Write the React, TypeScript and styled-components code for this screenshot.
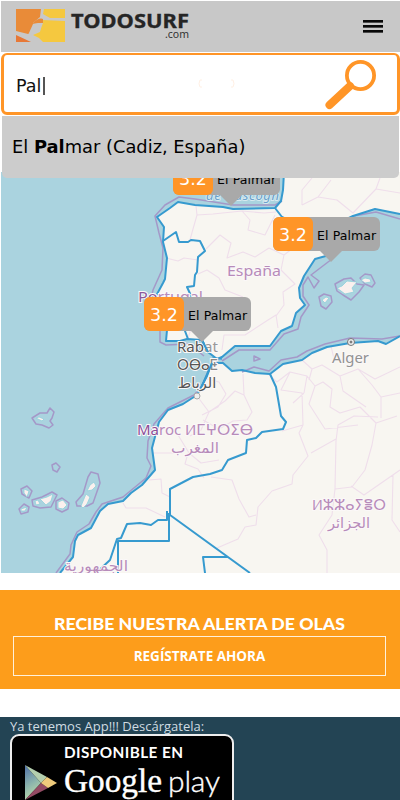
import React from "react";
import styled, { createGlobalStyle } from "styled-components";

const GlobalStyle = createGlobalStyle`
  * { box-sizing: border-box; }
  html, body { margin: 0; background: #fff; }
  body { height: 800px; overflow: hidden; font-family: "DejaVu Sans", sans-serif; }
`;

const Page = styled.div`
  width: 400px;
  height: 800px;
  overflow: hidden;
  display: flex;
  flex-direction: column;
`;

const Header = styled.header`
  flex: none;
  height: 51px;
  margin: 1px 0 0 1px;
  padding: 0 17px 0 13px;
  background: #c8c8c8;
  display: flex;
  justify-content: space-between;
`;

const Logo = styled.svg`
  width: 180px;
  height: 44px;
`;

const MenuButton = styled.button`
  width: 20px;
  height: 13px;
  margin-top: 19px;
  padding: 0;
  border: 0;
  background: none;
  display: flex;
  flex-direction: column;
  justify-content: space-between;
`;

const MenuLine = styled.span`
  display: block;
  width: 100%;
  height: 3px;
  border: solid #4a4a4a;
  border-width: 0 0 1px;
  background: #080808;
`;

const SearchBox = styled.div`
  flex: none;
  height: 62px;
  margin: 1px 0 0 1px;
  padding-left: 12px;
  border: 3px solid #ff9527;
  border-top-width: 2px;
  border-radius: 6px;
  background: #fff;
  display: flex;
  align-items: center;
`;

const Query = styled.span`
  width: 181px;
  display: flex;
  align-items: center;
  color: #111;
  font-size: 17.5px;
  line-height: 24px;
  padding-top: 4px;
`;

const Caret = styled.i`
  width: 2px;
  height: 18px;
  margin-left: 2px;
  background: #555;
`;

const FaintMarks = styled.svg`
  width: 38px;
  height: 10px;
  margin-right: auto;
`;

const SearchIcon = styled.svg`
  width: 54px;
  height: 54px;
  margin-right: 19px;
`;

const Suggestion = styled.div`
  flex: none;
  position: relative;
  z-index: 2;
  height: 62px;
  margin: 1px 1px 0 2px;
  padding: 0 0 1px 10px;
  border-radius: 0 0 5px 5px;
  background: #ccc;
  color: #000;
  display: flex;
  align-items: center;
  font-size: 17.85px;
  white-space: pre;
`;

const MapArea = styled.section`
  flex: none;
  position: relative;
  height: 401px;
  margin: -6px 0 0 1px;
  overflow: hidden;
  background: #aad3df;
`;

const MapDrawing = styled.svg`
  display: block;
  width: 399px;
  height: 401px;
`;

const Pin = styled.div<{ $x: number; $y: number }>`
  position: absolute;
  left: ${(p) => p.$x - 1}px;
  top: ${(p) => p.$y - 172}px;
  width: 107px;
  height: 34px;
  display: flex;
  border-radius: 6px;
  background: #a9a9a9;
  &::after {
    content: "";
    position: absolute;
    left: 46px;
    top: 33px;
    border: 12px solid transparent;
    border-top-color: #a9a9a9;
    border-bottom: 0;
  }
`;

const Score = styled.span`
  width: 40px;
  border-radius: 6px;
  background: #ff9527;
  color: #fff;
  font-size: 17.5px;
  line-height: 36px;
  text-align: center;
`;

const SpotName = styled.span`
  padding-left: 4px;
  color: #000;
  font-size: 12.5px;
  letter-spacing: 0.1px;
  line-height: 37px;
  white-space: nowrap;
`;

const Alert = styled.section`
  flex: none;
  height: 99px;
  margin-top: 17px;
  padding: 23px 14px 13px 13px;
  background: #fd9d1b;
  display: flex;
  flex-direction: column;
`;

const AlertTitle = styled.h2`
  margin: 0;
  height: 23px;
  color: #fff;
  font: 900 17.7px/22px Lato, sans-serif;
  text-align: center;
  white-space: nowrap;
`;

const RegisterButton = styled.button`
  height: 40px;
  padding: 0;
  border: 1px solid #fff1da;
  background: transparent;
  color: #fff;
  font: 700 13.5px/20px "Open Sans", sans-serif;
`;

const Footer = styled.footer`
  flex: 1;
  margin-top: 28px;
  padding-left: 10px;
  background: #234454;
  color: #d0dce2;
  font: 13px/17px "Open Sans", sans-serif;
`;

const FooterText = styled.div`
  height: 17px;
  padding-top: 1px;
`;

const StoreBadge = styled.a`
  display: block;
  width: 224px;
  height: 78px;
  border: 2px solid #eee;
  border-radius: 9px;
  background: #000;
`;

const StoreArt = styled.svg`
  display: block;
  width: 220px;
  height: 74px;
`;

const AFRICA =
  "M60 573 73 557 75 541 78 535 91 528 100 511 108 504 123 501 131 493 142 485 155 470 152 448 159 422 168 410 183 404 197 395 207 376 212 363 223 363 232 371 242 370 255 373 270 374 283 364 302 360 312 353 327 347 350 343 378 341 386 344 400 336 400 573Z";
const IBERIA =
  "M284 172 283 190 281 201 275 208 233 209 223 207 195 205 178 202 170 208 157 217 164 227 163 242 167 258 165 279 163 283 156 296 164 316 167 330 166 341 180 341 187 339 202 340 208 352 217 359 222 357 235 346 270 346 281 331 292 326 296 313 305 305 300 298 299 288 304 276 315 259 333 254 352 235 353 216 375 209 400 214 400 172Z";

const BORDERS = [
  "M163 241 176 232 179 242 188 242 191 240 200 241 205 251 198 257 197 272 195 275 194 286 187 287 193 300 189 321 185 331 188 339",
  "M275 208 282 217 300 226 326 229 353 216",
  "M270 374 276 387 281 416 286 422 283 429 262 432 256 438 247 440 246 453 228 460 222 470 210 474 193 477 170 489 170 515 250 573",
  "M167 511V520L158 520 151 525 140 523 127 524 121 538 117 539 110 560 96 573",
  "M169 513V541H118V573",
  "M228 557H203L205 573",
];

const PROVINCES = [
  "M196 206 197 215 213 214 242 211 250 220 248 230 265 235 275 215M197 215 193 229 190 240M166 258 178 261 184 258 198 260M198 274 207 270 219 278 225 290 243 297M206 249 220 235 231 243 227 258 243 252 255 257 269 248M269 248 284 255 281 270 295 284 283 292 284 305 276 316M242 211 264 213 276 212M284 255 301 242M302 205 318 197 337 200 353 213M302 205 302 190 312 178M318 197 331 180M353 213 376 189 380 178M376 189 400 193M188 338 193 323 206 309M222 350 224 335 245 335 268 320 276 315 278 328",
  "M197 396 209 412 225 401 235 391 244 395 252 412 247 420 233 421 219 429 203 420M207 379 219 382 226 394M244 395 243 374M226 394 218 407 202 415M209 412 201 430 190 436M178 435 189 453 201 463 219 460M152 453 179 453M149 480 161 479 162 493 170 497M123 503 126 508 146 508 165 517M188 453 185 464 198 469 204 478",
  "M269 375 277 382 290 372 307 376 315 386 323 382 332 389 330 407 340 413 360 407 376 423 397 416M290 372 281 390 302 393 303 425 282 431M307 376 304 393M315 386 309 404 325 429 358 425M304 393 293 403M302 360 312 369 322 365 340 376 358 369 375 379 400 367M312 369 309 380M331 346 334 359 350 361M340 376 343 391 366 407M358 369 372 385 381 397 381 418M381 397 400 393M376 423 372 445 365 470 352 487 335 489 332 515 319 535 327 550 327 573M335 489 336 441 338 425 354 416 378 417M303 425 299 433 308 456 293 475 292 484 272 491 258 507 256 525 245 527 238 539 217 548M211 477 232 480 239 499 249 517 256 515M311 453 336 439M351 486 364 495 400 470M393 475 392 520 400 532",
];

const ISLANDS = [
  "M36 418 39 417 44 419 42 421Z",
  "M24 489 29 491 27 497 24 493Z",
  "M21 509 27 507 25 511 21 511Z",
  "M35 501 38 500 40 504 36 505Z",
  "M40 499 47 497 53 494 51 501 46 505Z",
  "M58 502 63 500 67 505 63 509 58 508Z",
  "M81 506 86 494 90 497 87 504 83 508Z",
  "M87 491 90 485 94 482 96 486 92 490Z",
  "M337 288 342 286 347 281 357 282 352 288 354 292 345 294Z",
  "M361 280 365 278 370 279 371 282 365 283Z",
  "M322 300 326 297 329 298 325 303Z",
];

const MARITIME = [
  "M32 418 40 413H47L50 408 54 412 52 418 50 421 53 425 49 428 42 425 36 424Z",
  "M21 489 27 486 32 491 29 498 22 494Z",
  "M19 509 24 504 29 507 28 512 21 514Z",
  "M32 500 42 497 52 492 57 495 51 507 40 508 33 506Z",
  "M56 501 62 498 69 503 68 509 62 512 56 509Z",
  "M76 502 83 494 88 477 91 472 98 474 100 483 93 503 87 506 77 506Z",
  "M52 465 56 463 60 467 57 472 53 470Z",
  "M335 284 344 279 351 278 357 284 364 285 359 292 351 300 343 295 337 291Z",
  "M360 278 365 274 371 275 375 283 372 287 365 284Z",
  "M319 297 324 294 331 296 332 302 326 309 321 306Z",
  "M254 356 260 359 254 361Z",
];

const PinMarker = ({ x, y }: { x: number; y: number }) => (
  <Pin $x={x} $y={y}>
    <Score>3.2</Score>
    <SpotName>El Palmar</SpotName>
  </Pin>
);

const label = {
  fontFamily: '"Noto Sans", "DejaVu Sans", sans-serif',
  stroke: "#fbf8f8",
  strokeWidth: 2,
  paintOrder: "stroke" as const,
};

const MapLayer = () => (
  <MapDrawing viewBox="1 172 399 401">
    <g fill="#f8f6f1">
      <path d={AFRICA} />
      <path d={IBERIA} />
    </g>
    <g fill="none" stroke="#efdeeb" strokeWidth="1.1" strokeLinejoin="round">
      {PROVINCES.map((d) => <path key={d} d={d} />)}
    </g>
    <g fill="none" stroke="#a498c8" strokeWidth="1.5" strokeLinejoin="round">
      <path d="M282 201 275 205 233 205 195 199 179 197 165 205 155 216 159 233 163 248 162 270 153 290 151 300M160 330 160 342 166 345 189 344 204 356M222 361 239 350 270 350 284 334 298 329 301 317 309 305 303 296 303 285 308 277 314 288 319 281 311 275 332 259M354 216 376 212 400 219" />
      <path d="M400 336 382 339 350 338 325 344 307 351 297 357 281 360 269 371 254 367 242 372M211 364 202 386 194 395 168 408 154 424 148 441 147 458 151 466 146 478 123 497 102 504 96 512 89 524 77 532 71 545 70 554 56 573" />
      {MARITIME.map((d) => <path key={d} d={d} />)}
    </g>
    <g fill="#faf0ee" stroke="#8fd0da" strokeWidth=".8">
      {ISLANDS.map((d) => <path key={d} d={d} />)}
    </g>
    <g fill="none" stroke="#369acf" strokeWidth="2" strokeLinejoin="round">
      <path d={AFRICA.replace(" 400 573Z", "")} />
      <path d={IBERIA.replace(" 400 172Z", "")} />
      <path d="M212 363 213 358 222 359" strokeWidth="1.6" />
      {BORDERS.map((d) => <path key={d} d={d} />)}
    </g>
    <g {...label} fill="#b78bba" fontSize="14.5">
      <text x="227" y="276" textLength="54" lengthAdjust="spacingAndGlyphs">España</text>
      <text x="138" y="302" textLength="65" lengthAdjust="spacingAndGlyphs"><tspan fill="#8c5b9b">Po</tspan>rtugal</text>
      <text x="137" y="435" textLength="116" lengthAdjust="spacingAndGlyphs"><tspan fill="#8c4e99">Ma</tspan>roc Иⵎⵖⵔⵉⴱ</text>
      <text x="195" y="453" textAnchor="middle" fontSize="15" textLength="48" lengthAdjust="spacingAndGlyphs">المغرب</text>
      <text x="312" y="510" textLength="74" lengthAdjust="spacingAndGlyphs">Иⵣⵣⴰⵢⴻⵔ</text>
      <text x="349" y="528" textAnchor="middle" fontSize="14.5">الجزائر</text>
      <text x="96" y="571" textAnchor="middle" textLength="64" lengthAdjust="spacingAndGlyphs">الجمهورية</text>
    </g>
    <text {...label} x="206" y="200" fontSize="13" fontStyle="italic" fill="#6aa1cc" stroke="#d7e9ef" textLength="73">de Gascogn</text>
    <g {...label} fontSize="14.5" fill="#555">
      <text x="177" y="352" textLength="41" lengthAdjust="spacingAndGlyphs">Rab<tspan fill="#999">at</tspan></text>
      <text x="177" y="370" textLength="41" lengthAdjust="spacingAndGlyphs">ⵔⴱⴰ<tspan fill="#888">ⵟ</tspan></text>
      <text x="197" y="388" textAnchor="middle">الرباط</text>
      <text x="332" y="363" fill="#929292" textLength="37" lengthAdjust="spacingAndGlyphs">Alger</text>
    </g>
    <path d="M202 340 208 352 M212 363 202 386" stroke="#369acf" strokeWidth="2" />
    <g fill="#eee" stroke="#777">
      <circle cx="197" cy="396" r="3" stroke="#aaa" />
      <circle cx="351" cy="342" r="3.5" />
      <circle cx="351" cy="342" r="1" fill="#777" />
    </g>
  </MapDrawing>
);

export default function App() {
  return (
    <Page>
      <GlobalStyle />
      <Header>
        <Logo viewBox="14 1 180 44">
          <path fill="#e98b38" d="M16 9H41L40 17 33 23C35 25 32 32 28 34L16 31Z" />
          <path fill="#e77836" d="M16 35 31 42H16Z" />
          <path fill="#f5c83f" d="M44 9H65V18L50 18 43 14ZM42 20 65 21V42H43L39 38 33 35 40 32Z" />
          <path d="M33 24 41 19 43 23 40 31 34 34 29 33Z" fill="#c8c8c8" />
          <path d="M32 24Q39 17 43 19L43 23 38 23Z" fill="#e98b38" />
          <text x="71" y="28" fontFamily="Noto Sans" fontWeight="700" fontSize="20" fill="#252525" stroke="#252525" strokeWidth=".3" textLength="118" lengthAdjust="spacingAndGlyphs">TODOSURF</text>
          <text x="165" y="38" fontFamily="Noto Sans" fontSize="10.5" fill="#333" textLength="24">.com</text>
        </Logo>
        <MenuButton aria-label="Menú"><MenuLine /><MenuLine /><MenuLine /></MenuButton>
      </Header>
      <SearchBox>
        <Query>Pal<Caret /></Query>
        <FaintMarks viewBox="0 0 38 10" fill="none" stroke="#fff0e4">
          <path d="M5 1H3Q1 5 3 8H5M34 1H36Q38 5 36 8H34" />
        </FaintMarks>
        <SearchIcon viewBox="324 57 54 54" fill="none" stroke="#ff9527">
          <circle cx="360.5" cy="75.5" r="13.6" strokeWidth="3.8" />
          <path d="M350 86 329.5 105" strokeWidth="8" strokeLinecap="round" />
        </SearchIcon>
      </SearchBox>
      <Suggestion>El <b>Pal</b>mar (Cadiz, España)</Suggestion>
      <MapArea>
        <MapLayer />
        <PinMarker x={173} y={161} />
        <PinMarker x={273} y={217} />
        <PinMarker x={144} y={297} />
      </MapArea>
      <Alert>
        <AlertTitle>RECIBE NUESTRA ALERTA DE OLAS</AlertTitle>
        <RegisterButton>REGÍSTRATE AHORA</RegisterButton>
      </Alert>
      <Footer>
        <FooterText>Ya tenemos App!!! Descárgatela:</FooterText>
        <StoreBadge>
          <StoreArt viewBox="12 736 220 74">
            <defs>
              <linearGradient id="playFace" x1="0" y1="0" x2=".3" y2="1">
                <stop offset="0" stopColor="#4f6fa8" />
                <stop offset=".6" stopColor="#8db5ac" />
                <stop offset="1" stopColor="#b9d8a8" />
              </linearGradient>
            </defs>
            <text x="64" y="757.5" fontFamily="Lato" fontWeight="700" fontSize="15.3" fill="#fff" textLength="119">DISPONIBLE EN</text>
            <path fill="url(#playFace)" d="M25 765 41 783 25 800Z" />
            <path fill="#b4cfae" d="M25 765 47 777 41 783Z" />
            <path fill="#934a63" d="M41 783 48 788 25 800Z" />
            <path fill="#efcb7c" d="M47 777 57 783 48 788 41 783Z" />
            <text x="64" y="792" fontFamily="Liberation Serif" fontSize="33.5" fill="#fff" stroke="#fff" strokeWidth=".4" textLength="98" lengthAdjust="spacingAndGlyphs">Google</text>
            <text x="168" y="792" fontFamily="Lato" fontWeight="300" fontSize="30" fill="#fff" stroke="#fff" strokeWidth=".4" textLength="52">play</text>
          </StoreArt>
        </StoreBadge>
      </Footer>
    </Page>
  );
}
